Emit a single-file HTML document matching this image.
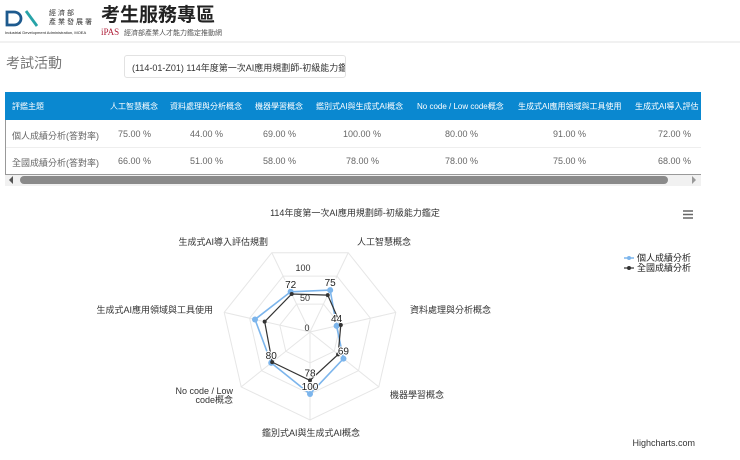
<!DOCTYPE html>
<html><head><meta charset="utf-8"><style>
*{margin:0;padding:0;box-sizing:border-box}
body{width:740px;height:460px;background:#fff;font-family:"Liberation Sans","Noto Sans CJK TC",sans-serif;position:relative;overflow:hidden;color:#333}
.a{position:absolute;white-space:nowrap}
</style></head><body>
<svg class="a" style="left:0;top:0" width="110" height="40">
<path d="M7 12 H14 A7 6.5 0 0 1 14 25 H7 Z" fill="none" stroke="#1d5a8e" stroke-width="2.8"/>
<path d="M26 11 L37 26" stroke="#27a3a8" stroke-width="2.8"/>
<text x="5" y="34" font-size="4" fill="#222" font-family="Liberation Sans">Industrial Development Administration, MOEA</text>
</svg>
<div class="a" style="left:49px;top:9px;font-size:7px;color:#333;letter-spacing:2px;line-height:9px">經濟部<br>產業發展署</div>
<div class="a" style="left:101px;top:4px;font-size:19px;font-weight:bold;color:#222;line-height:23px">考生服務專區</div>
<div class="a" style="left:101px;top:27px;font-size:9px;color:#b0203a;font-family:'Liberation Serif',serif">iPAS</div>
<div class="a" style="left:124px;top:28px;font-size:7px;color:#555">經濟部產業人才能力鑑定推動網</div>
<div class="a" style="left:0;top:41px;width:740px;height:2px;background:#f1f1f1"></div>
<div class="a" style="left:6px;top:53px;font-size:14px;color:#777">考試活動</div>
<div class="a" style="left:124px;top:55px;width:222px;height:23px;border:1px solid #e2e2e2;border-radius:3px;font-size:9px;color:#333;padding:5px 0 0 7px;overflow:hidden">(114-01-Z01) 114年度第一次AI應用規劃師-初級能力鑑定</div>
<div class="a" style="left:5px;top:92px;width:696px;height:28px;background:#0a88d0"></div>
<div class="a" style="left:5px;top:120px;width:696px;height:55px;border-left:1px solid #999;border-bottom:1px solid #999"></div>
<div class="a" style="left:6px;top:147px;width:695px;height:1px;background:#eee"></div>
<div style="font-size:8px;color:#fff">
<span class="a" style="left:12px;top:101px">評鑑主題</span>
<span class="a" style="left:110px;top:101px">人工智慧概念</span>
<span class="a" style="left:170px;top:101px">資料處理與分析概念</span>
<span class="a" style="left:255px;top:101px">機器學習概念</span>
<span class="a" style="left:316px;top:101px">鑑別式AI與生成式AI概念</span>
<span class="a" style="left:417px;top:101px">No code / Low code概念</span>
<span class="a" style="left:518px;top:101px">生成式AI應用領域與工具使用</span>
<span class="a" style="left:635px;top:101px">生成式AI導入評估</span>
</div>
<div style="font-size:9px;color:#666">
<span class="a" style="left:12px;top:129px">個人成績分析(答對率)</span>
<span class="a" style="left:118px;top:129px">75.00 %</span><span class="a" style="left:190px;top:129px">44.00 %</span><span class="a" style="left:263px;top:129px">69.00 %</span><span class="a" style="left:343px;top:129px">100.00 %</span><span class="a" style="left:445px;top:129px">80.00 %</span><span class="a" style="left:553px;top:129px">91.00 %</span><span class="a" style="left:658px;top:129px">72.00 %</span>
<span class="a" style="left:12px;top:156px">全國成績分析(答對率)</span>
<span class="a" style="left:118px;top:156px">66.00 %</span><span class="a" style="left:190px;top:156px">51.00 %</span><span class="a" style="left:263px;top:156px">58.00 %</span><span class="a" style="left:346px;top:156px">78.00 %</span><span class="a" style="left:445px;top:156px">78.00 %</span><span class="a" style="left:553px;top:156px">75.00 %</span><span class="a" style="left:658px;top:156px">68.00 %</span>
</div>
<div class="a" style="left:5px;top:175px;width:696px;height:11px;background:#f1f1f1"></div>
<div class="a" style="left:20px;top:176px;width:648px;height:8px;background:#8a8a8a;border-radius:4px"></div>
<div class="a" style="left:9px;top:176px;width:0;height:0;border-top:4px solid transparent;border-bottom:4px solid transparent;border-right:4px solid #555"></div>
<div class="a" style="left:692px;top:176px;width:0;height:0;border-top:4px solid transparent;border-bottom:4px solid transparent;border-left:4px solid #999"></div>
<svg class="a" style="left:0;top:0" width="740" height="460" font-family="Liberation Sans, Noto Sans CJK TC, sans-serif">
<text x="355" y="216" font-size="9" text-anchor="middle" fill="#333">114年度第一次AI應用規劃師-初級能力鑑定</text>
<g stroke="#666" stroke-width="1.6"><path d="M683 211h10M683 214.5h10M683 218h10"/></g>
<g id="grid" fill="none" stroke="#e6e6e6" stroke-width="1"></g>
<g font-size="9" fill="#333">
<text x="357" y="245">人工智慧概念</text>
<text x="410" y="313">資料處理與分析概念</text>
<text x="390" y="398">機器學習概念</text>
<text x="311" y="436" text-anchor="middle">鑑別式AI與生成式AI概念</text>
<text x="233" y="394" text-anchor="end">No code / Low</text>
<text x="233" y="403" text-anchor="end">code概念</text>
<text x="213" y="313" text-anchor="end">生成式AI應用領域與工具使用</text>
<text x="268" y="245" text-anchor="end">生成式AI導入評估規劃</text>
</g>
<g font-size="9" fill="#333">
<text x="303" y="271" text-anchor="middle">100</text>
<text x="305" y="301" text-anchor="middle">50</text>
<text x="307" y="331" text-anchor="middle">0</text>
</g>
<g id="series"></g>
<g font-size="9" fill="#222">
<circle cx="629" cy="258" r="2" fill="#7cb5ec"/><path d="M624 258h10" stroke="#7cb5ec" stroke-width="1.5"/>
<text x="637" y="261">個人成績分析</text>
<circle cx="629" cy="268" r="2" fill="#333"/><path d="M624 268h10" stroke="#333" stroke-width="1.2"/>
<text x="637" y="271">全國成績分析</text>
</g>
<text x="695" y="446" font-size="9" text-anchor="end" fill="#333">Highcharts.com</text>
</svg>
<script>
var cx=310,cy=332,R=88,k=0.62;
function pt(i,r){var a=(-64.29+i*51.43)*Math.PI/180;return [cx+r*Math.cos(a),cy+r*Math.sin(a)];}
var g=document.getElementById('grid'),h='';
[31,62,R].forEach(function(r){var p=[];for(var i=0;i<7;i++)p.push(pt(i,r).map(function(v){return v.toFixed(1)}).join(','));h+='<polygon points="'+p.join(' ')+'"/>';});
for(var i=0;i<7;i++){var q=pt(i,R);h+='<line x1="'+cx+'" y1="'+cy+'" x2="'+q[0]+'" y2="'+q[1]+'"/>';}
g.innerHTML=h;
var A=[75,44,69,100,80,91,72],B=[66,51,58,78,78,75,68],s='';
function poly(d,c,w,rad){var p=d.map(function(v,i){return pt(i,v*k)});s+='<polygon points="'+p.map(function(x){return x.join(',')}).join(' ')+'" fill="none" stroke="'+c+'" stroke-width="'+w+'"/>';p.forEach(function(x){s+='<circle cx="'+x[0]+'" cy="'+x[1]+'" r="'+rad+'" fill="'+c+'"/>';});return p;}
var pa=poly(A,'#7cb5ec',1.6,3);poly(B,'#333',1.2,2);
var lab=[[0,'75'],[1,'44'],[2,'69'],[3,'100'],[4,'80'],[6,'72']];
lab.forEach(function(l){var p=pa[l[0]];s+='<text x="'+p[0]+'" y="'+(p[1]-4)+'" font-size="10" text-anchor="middle" fill="#222" stroke="#fff" stroke-width="2" paint-order="stroke">'+l[1]+'</text>';});
var p2=pt(3,78*k);s+='<text x="'+p2[0]+'" y="'+(p2[1]-4)+'" font-size="10" text-anchor="middle" fill="#222" stroke="#fff" stroke-width="2" paint-order="stroke">78</text>';
document.getElementById('series').innerHTML=s;
</script>
</body></html>
